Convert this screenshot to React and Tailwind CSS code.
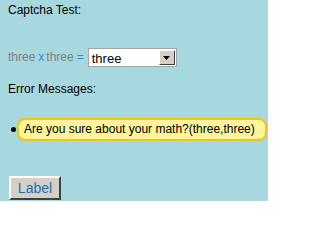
export default function App() {
  return (
    <div className="w-[268px] h-[201px] overflow-hidden bg-[#a8d8df] text-[12px] leading-[15px] text-black font-['Liberation_Sans',Arial,sans-serif]">
      <div className="pl-[8px] pt-[3px]">Captcha Test:</div>

      <div className="flex items-center mt-[30px] pl-[8px]">
        <span className="text-[#808080]">three</span>
        <span className="text-[#2f8fd0] ml-[3px]">x</span>
        <span className="text-[#808080] ml-[2px]">three</span>
        <span className="text-[#2f8fd0] ml-[3px]">=</span>
        <div className="ml-[4px] flex items-center w-[89px] h-[19px] border border-[#a5a5a5] bg-white">
          <span className="flex-1 pl-[3px] pt-[1px] text-[13px]">three</span>
          <div className="w-[16px] h-[15px] mr-[1px] bg-[#d4d0c8] border border-t-white border-l-white border-r-[#404040] border-b-[#404040] flex items-center justify-center">
            <svg width="7" height="4" viewBox="0 0 7 4">
              <path d="M0 0h7L3.5 4z" fill="#000" />
            </svg>
          </div>
        </div>
      </div>

      <div className="pl-[8px] mt-[15px]">Error Messages:</div>

      <ul className="mt-[21px] pl-[11px] flex items-center">
        <li className="flex items-center">
          <span className="w-[5px] h-[5px] rounded-full bg-black mr-[1px]"></span>
          <span className="h-[23px] flex items-center pl-[5px] pr-[10px] bg-[#fdf49c] border-2 border-[#f0c419] rounded-[8px] whitespace-nowrap">
            Are you sure about your math?(three,three)
          </span>
        </li>
      </ul>

      <div className="pl-[9px] mt-[35px]">
        <button className="w-[52px] h-[24px] bg-[#d4d0c8] text-[#2270b0] text-[14px] border-2 border-t-white border-l-white border-r-[#404040] border-b-[#404040]">
          Label
        </button>
      </div>
    </div>
  );
}
